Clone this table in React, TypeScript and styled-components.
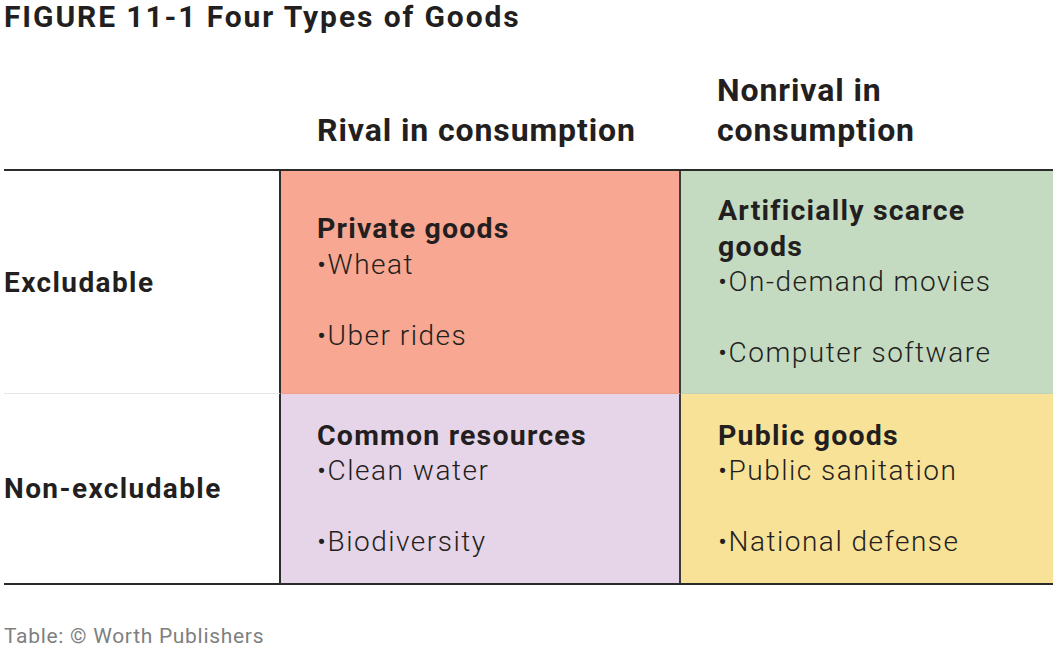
import styled, { createGlobalStyle } from "styled-components";

const GlobalStyle = createGlobalStyle`
  body {
    margin: 0;
    background: #ffffff;
    font-family: Roboto, "Liberation Sans", Arial, sans-serif;
    color: #231f20;
  }
`;

const quadrants = [
  { title: "Private goods", items: ["Wheat", "Uber rides"], color: "#f7a792" },
  { title: "Artificially scarce goods", items: ["On-demand movies", "Computer software"], color: "#c4dbc2" },
  { title: "Common resources", items: ["Clean water", "Biodiversity"], color: "#e6d4e8" },
  { title: "Public goods", items: ["Public sanitation", "National defense"], color: "#f8e298" },
];

const rows = [
  { label: "Excludable", cells: [quadrants[0], quadrants[1]] },
  { label: "Non-excludable", cells: [quadrants[2], quadrants[3]] },
];

const App = () => {
  return (
    <>
      <GlobalStyle />
      <Page>
        <Title>FIGURE 11-1 Four Types of Goods</Title>
        <HeaderRow>
          <span />
          <ColumnHead>Rival in consumption</ColumnHead>
          <ColumnHead>
            Nonrival in
            <br />
            consumption
          </ColumnHead>
        </HeaderRow>
        <Table>
          {rows.map((row, r) => (
            <Row key={row.label} $first={r === 0}>
              <RowLabel $first={r === 0}>{row.label}</RowLabel>
              {row.cells.map((cell, c) => (
                <Cell key={cell.title} $color={cell.color} $last={c === 1} $first={r === 0}>
                  <CellTitle>{cell.title}</CellTitle>
                  <Item>•{cell.items[0]}</Item>
                  <Spacer />
                  <Item>•{cell.items[1]}</Item>
                </Cell>
              ))}
            </Row>
          ))}
        </Table>
        <Credit>Table: © Worth Publishers</Credit>
      </Page>
    </>
  );
};

export default App;

const Page = styled.div`
  width: 1049px;
  padding-left: 4px;
`;

const Title = styled.h1`
  margin: 0;
  font-size: 30px;
  line-height: 34px;
  letter-spacing: 1.9px;
  font-weight: 700;
  color: #231f20;
`;

const HeaderRow = styled.div`
  display: grid;
  grid-template-columns: 277px 400px 1fr;
  align-items: end;
  height: 135px;
  padding-bottom: 19px;
  box-sizing: border-box;
`;

const ColumnHead = styled.div`
  padding-left: 36px;
  font-size: 32px;
  line-height: 40px;
  letter-spacing: 0.9px;
  font-weight: 700;
`;

const Table = styled.div`
  border-top: 2px solid #2b2b2b;
  border-bottom: 2px solid #2b2b2b;
`;

const Row = styled.div<{ $first: boolean }>`
  display: grid;
  grid-template-columns: 277px 400px 1fr;
  height: ${(p) => (p.$first ? "223px" : "189px")};
`;

const RowLabel = styled.div<{ $first: boolean }>`
  display: flex;
  align-items: center;
  border-right: 2px solid #2b2b2b;
  border-bottom: ${(p) => (p.$first ? "1px solid #e6e6e6" : "none")};
  font-size: 28px;
  letter-spacing: 1.4px;
  font-weight: 700;
`;

const Cell = styled.div<{ $color: string; $last: boolean; $first: boolean }>`
  display: flex;
  flex-direction: column;
  justify-content: center;
  padding-left: ${(p) => (p.$last ? "37px" : "36px")};
  background: ${(p) => p.$color};
  border-right: ${(p) => (p.$last ? "none" : "2px solid #3a3a3a")};
  border-bottom: ${(p) => (p.$first ? "1px solid rgba(0, 0, 0, 0.03)" : "none")};
  box-sizing: border-box;
`;

const CellTitle = styled.div`
  font-size: 28.5px;
  line-height: 35.5px;
  letter-spacing: 1.2px;
  font-weight: 700;
  max-width: 300px;
`;

const Item = styled.div`
  font-size: 28px;
  line-height: 35.5px;
  letter-spacing: 1.5px;
  font-weight: 300;
`;

const Spacer = styled.div`
  height: 35.5px;
`;

const Credit = styled.div`
  margin-top: 39px;
  font-size: 21px;
  line-height: 24px;
  letter-spacing: 0.7px;
  color: #7f7f7f;
`;
